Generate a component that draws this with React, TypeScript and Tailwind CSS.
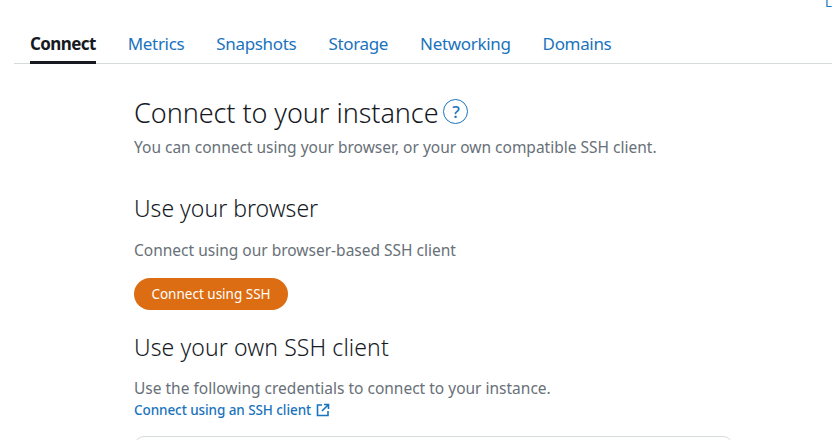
const font = { fontFamily: '"Noto Sans", sans-serif' };

function Tab({ label, active }: { label: string; active?: boolean }) {
  return (
    <a
      className={
        active
          ? "relative h-[34px] pt-[1px] text-[17px] leading-[26px] font-bold text-[#16191f] tracking-[-0.6px] border-b-[3px] border-[#16191f]"
          : "h-[34px] pt-[1px] text-[17px] leading-[26px] text-[#1a73bd] tracking-[-0.33px]"
      }
    >
      {label}
    </a>
  );
}

export default function App() {
  return (
    <div className="relative h-[440px] w-[832px] overflow-hidden bg-white" style={font}>
      <span className="absolute right-0 top-[-8px] w-[7px] overflow-hidden text-[13px] leading-[20px] text-[#1a73bd]">
        Lo
      </span>
      <div className="pt-[30px] pl-[14px]">
        <div className="flex h-[34px] gap-[32px] border-b border-[#d5dbdb] pl-[16px]">
          <Tab label="Connect" active />
          <Tab label="Metrics" />
          <Tab label="Snapshots" />
          <Tab label="Storage" />
          <Tab label="Networking" />
          <Tab label="Domains" />
        </div>
      </div>
      <div className="pl-[134px]">
        <div className="mt-[30px] flex h-[36px] items-center gap-[5px]">
          <h1 className="pt-[1px] text-[27px] leading-[36px] font-light text-[#16191f] tracking-[-0.06px]">
            Connect to your instance
          </h1>
          <span className="mb-[2px] flex h-[25px] w-[25px] items-center justify-center rounded-full border border-[#1a73bd] text-[17px] leading-none font-medium text-[#1a73bd]">
            ?
          </span>
        </div>
        <p className="mt-[6px] text-[15.5px] leading-[22px] text-[#687078]">
          You can connect using your browser, or your own compatible SSH client.
        </p>
        <h2 className="mt-[34px] text-[23px] leading-[32px] font-light text-[#16191f]">
          Use your browser
        </h2>
        <p className="mt-[15px] text-[15.5px] leading-[22px] text-[#687078]">
          Connect using our browser-based SSH client
        </p>
        <button className="mt-[17px] flex h-[32px] w-[154px] items-center justify-center rounded-full bg-[#dc6d12] text-[13.5px] font-normal text-white">
          Connect using SSH
        </button>
        <h2 className="mt-[21px] text-[23px] leading-[32px] font-light text-[#16191f] tracking-[0.1px]">
          Use your own SSH client
        </h2>
        <p className="mt-[14px] text-[15.5px] leading-[22px] text-[#687078]">
          Use the following credentials to connect to your instance.
        </p>
        <a className="mt-[2px] flex h-[18px] items-center gap-[5px] text-[13.5px] leading-[18px] font-medium tracking-[-0.08px] text-[#1a73bd]">
          Connect using an SSH client
          <svg width="14" height="14" viewBox="0 0 14 14" fill="none" stroke="#1a73bd" strokeWidth="1.6">
            <path d="M6 2H1.5v10.5H12V8" />
            <path d="M8 1.5h4.5V6M12.5 1.5L6 8" />
          </svg>
        </a>
        <div className="mt-[17px] h-[60px] w-[599px] rounded-[10px] border border-[#d5dbdb]" />
      </div>
    </div>
  );
}
